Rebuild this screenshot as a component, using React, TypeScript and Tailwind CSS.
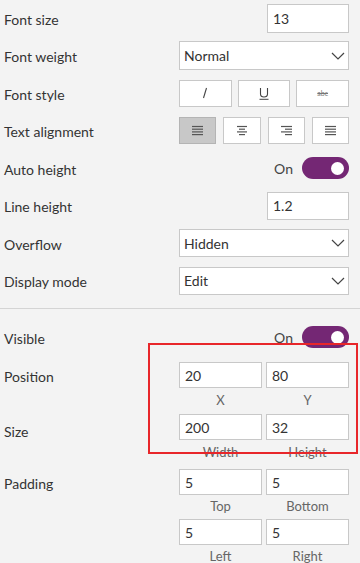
import React from "react";

const font = { fontFamily: "Lato, 'Noto Sans', sans-serif" };

function Label({ children }: { children: React.ReactNode }) {
  return <div className="text-[14px] text-[#333333] leading-none">{children}</div>;
}

function Chevron() {
  return (
    <svg width="14" height="8" viewBox="0 0 14 8" className="shrink-0">
      <path d="M1 1 L7 7 L13 1" fill="none" stroke="#444" strokeWidth="1.2" />
    </svg>
  );
}

function Input({ value, h = "h-[29px]" }: { value: string; h?: string }) {
  return (
    <div className={`${h} w-full bg-white border border-[#c8c8c8] flex items-center pl-[5px] text-[14px] text-[#333]`}>
      {value}
    </div>
  );
}

function Select({ value, h }: { value: string; h: string }) {
  return (
    <div className={`${h} w-full bg-white border border-[#c8c8c8] flex items-center justify-between pl-[4px] pr-[3px] text-[14px] text-[#333]`}>
      <span>{value}</span>
      <Chevron />
    </div>
  );
}

function Toggle() {
  return (
    <div className="flex items-center gap-[9px]">
      <span className="text-[14px] text-[#444]">On</span>
      <div className="w-[47px] h-[22px] rounded-full bg-[#742774] flex items-center justify-end pr-[5px]">
        <div className="w-[13px] h-[13px] rounded-full bg-white" />
      </div>
    </div>
  );
}

function Row({ label, h, children }: { label: string; h: string; children?: React.ReactNode }) {
  return (
    <div className={`flex items-center ${h}`}>
      <div className="w-[175px] shrink-0 pl-[4px] pt-[3px]">
        <Label>{label}</Label>
      </div>
      <div className="flex-1 flex justify-end">{children}</div>
    </div>
  );
}

function AlignIcon({ kind }: { kind: "left" | "center" | "right" | "justify" }) {
  const lines: [number, number][] =
    kind === "left"
      ? [[1, 12], [1, 12], [1, 12], [1, 12]]
      : kind === "center"
      ? [[2, 12], [4, 10], [2, 12], [4, 10]]
      : kind === "right"
      ? [[1, 12], [5, 12], [1, 12], [5, 12]]
      : [[1, 12], [1, 12], [1, 12], [1, 12]];
  return (
    <svg width="13" height="11" viewBox="0 0 13 11">
      {lines.map(([a, b], i) => (
        <line key={i} x1={a} x2={b} y1={1.5 + i * 2.7} y2={1.5 + i * 2.7} stroke="#555" strokeWidth="1.2" />
      ))}
    </svg>
  );
}

function Pair({ a, b, la, lb, labelH }: { a: string; b: string; la: string; lb: string; labelH: string }) {
  return (
    <div className="w-[170px]">
      <div className="grid grid-cols-2 gap-[4px]">
        <Input value={a} h="h-[26px]" />
        <Input value={b} h="h-[26px]" />
      </div>
      <div className={`grid grid-cols-2 gap-[4px] ${labelH} items-center text-[13px] text-[#666] text-center`}>
        <span>{la}</span>
        <span>{lb}</span>
      </div>
    </div>
  );
}

export default function App() {
  return (
    <div className="w-[360px] h-[563px] bg-[#f3f3f3] relative overflow-hidden pr-[11px]" style={font}>
      <Row label="Font size" h="h-[37px]">
        <div className="w-[82px]">
          <Input value="13" />
        </div>
      </Row>
      <Row label="Font weight" h="h-[37px]">
        <div className="w-[170px]">
          <Select value="Normal" h="h-[29px]" />
        </div>
      </Row>
      <Row label="Font style" h="h-[38px]">
        <div className="w-[170px] grid grid-cols-3 gap-[6px]">
          <div className="h-[27px] bg-white border border-[#c8c8c8] flex items-center justify-center">
            <svg width="8" height="12" viewBox="0 0 8 12">
              <line x1="5.5" y1="1" x2="2.5" y2="11" stroke="#444" strokeWidth="1.1" />
            </svg>
          </div>
          <div className="h-[27px] bg-white border border-[#c8c8c8] flex items-center justify-center">
            <svg width="10" height="13" viewBox="0 0 10 13">
              <path d="M1.5 1 V7 Q1.5 10 5 10 Q8.5 10 8.5 7 V1" fill="none" stroke="#444" strokeWidth="1.1" />
              <line x1="0.5" y1="12.3" x2="9.5" y2="12.3" stroke="#444" strokeWidth="1" />
            </svg>
          </div>
          <div className="h-[27px] bg-white border border-[#c8c8c8] flex items-center justify-center">
            <span className="text-[7px] text-[#777] line-through leading-none">abc</span>
          </div>
        </div>
      </Row>
      <Row label="Text alignment" h="h-[37px]">
        <div className="w-[170px] grid grid-cols-4 gap-[7px]">
          <div className="h-[27px] bg-[#c8c8c8] border border-[#b4b4b4] flex items-center justify-center">
            <AlignIcon kind="left" />
          </div>
          <div className="h-[27px] bg-white border border-[#c8c8c8] flex items-center justify-center">
            <AlignIcon kind="center" />
          </div>
          <div className="h-[27px] bg-white border border-[#c8c8c8] flex items-center justify-center">
            <AlignIcon kind="right" />
          </div>
          <div className="h-[27px] bg-white border border-[#c8c8c8] flex items-center justify-center">
            <AlignIcon kind="justify" />
          </div>
        </div>
      </Row>
      <Row label="Auto height" h="h-[38px]">
        <Toggle />
      </Row>
      <Row label="Line height" h="h-[37px]">
        <div className="w-[82px]">
          <Input value="1.2" h="h-[28px]" />
        </div>
      </Row>
      <Row label="Overflow" h="h-[38px]">
        <div className="w-[170px]">
          <Select value="Hidden" h="h-[28px]" />
        </div>
      </Row>
      <Row label="Display mode" h="h-[37px]">
        <div className="w-[170px]">
          <Select value="Edit" h="h-[28px]" />
        </div>
      </Row>
      <div className="mt-[9px] h-px bg-[#d4d4d4] -mr-[11px]" />
      <div className="pt-[17px]">
        <Row label="Visible" h="h-[22px]">
          <Toggle />
        </Row>
      </div>
      <div className="flex mt-[14px]">
        <div className="w-[175px] shrink-0 pl-[4px] h-[26px] flex items-center pt-[3px]">
          <Label>Position</Label>
        </div>
        <div className="flex-1 flex justify-end">
          <Pair a="20" b="80" la="X" lb="Y" labelH="h-[26px]" />
        </div>
      </div>
      <div className="flex">
        <div className="w-[175px] shrink-0 pl-[4px] h-[30px] flex items-center pt-[5px]">
          <Label>Size</Label>
        </div>
        <div className="flex-1 flex justify-end">
          <Pair a="200" b="32" la="Width" lb="Height" labelH="h-[26px]" />
        </div>
      </div>
      <div className="flex mt-[3px]">
        <div className="w-[175px] shrink-0 pl-[4px] h-[26px] flex items-center pt-[3px]">
          <Label>Padding</Label>
        </div>
        <div className="flex-1 flex flex-col items-end">
          <Pair a="5" b="5" la="Top" lb="Bottom" labelH="h-[24px]" />
          <Pair a="5" b="5" la="Left" lb="Right" labelH="h-[24px]" />
        </div>
      </div>
      <div className="absolute left-[148px] top-[343px] w-[210px] h-[111px] border-2 border-[#e8262a] pointer-events-none" />
    </div>
  );
}
